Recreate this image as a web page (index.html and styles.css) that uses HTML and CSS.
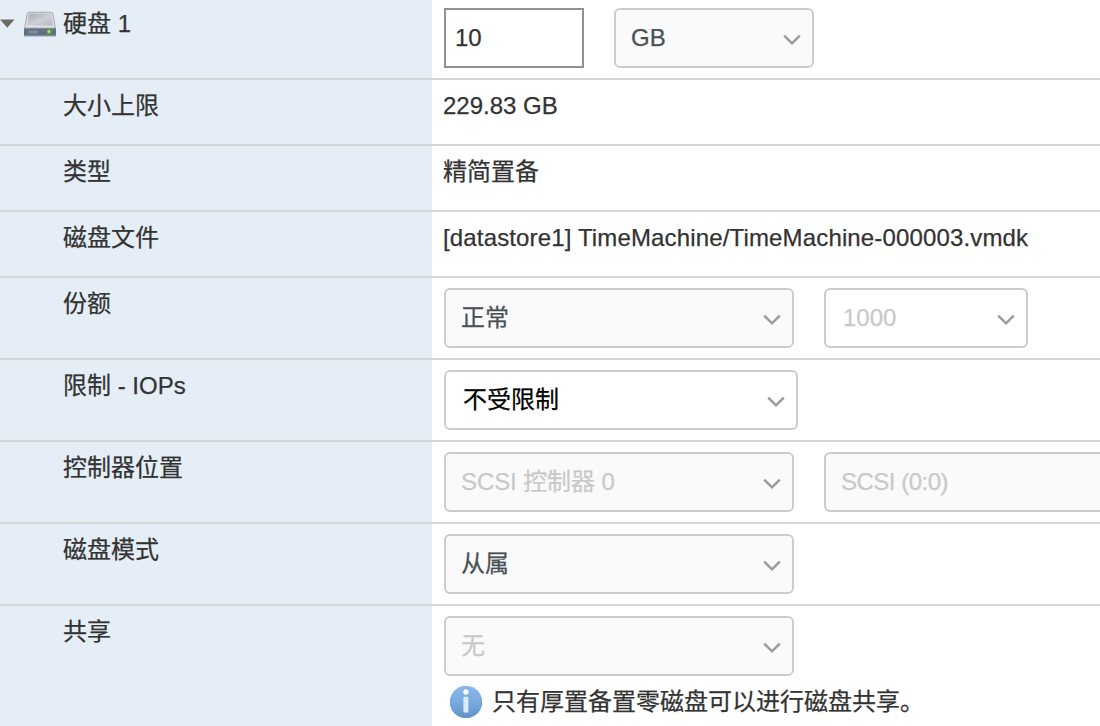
FILE: index.html
```html
<!DOCTYPE html>
<html lang="zh-CN">
<head>
<meta charset="utf-8">
<title>硬盘 1</title>
<link rel="stylesheet" href="styles.css">
</head>
<body>
<svg class="defs" width="0" height="0">
  <symbol id="chevron" viewBox="0 0 18 12"><path d="M1.2 1.700 L9 9.300 L16.800 1.700" fill="none" stroke="#9b9b9b" stroke-width="2.5"/></symbol>
</svg>
<main class="settings">
  <section class="row row-disk">
    <div class="label label-disk">
      <svg class="toggle" width="16" height="10" viewBox="0 0 16 10"><path d="M0 .5H14.5L7.2 8.8Z" fill="#6b6b66"/></svg>
      <svg class="disk" width="32" height="26" viewBox="0 0 32 26">
        <defs>
          <linearGradient id="top" x1="0" y1="0" x2="1" y2="1"><stop offset="0" stop-color="#a5a9b5"/><stop offset=".55" stop-color="#cfd1d8"/><stop offset="1" stop-color="#b2b5be"/></linearGradient>
          <linearGradient id="front" x1="0" y1="0" x2="0" y2="1"><stop offset="0" stop-color="#68737f"/><stop offset=".7" stop-color="#5c6b7c"/><stop offset="1" stop-color="#96a2b0"/></linearGradient>
        </defs>
        <path d="M4.500 .8H27.500Q28.700 .8 29.200 2.400L32 18H0L2.800 2.400Q3.300 .8 4.500 .8Z" fill="#a3a7b0"/>
        <path d="M5 1.800H27Q27.900 1.800 28.200 2.800L30.600 16.600H1.400L3.800 2.800Q4.100 1.800 5 1.800Z" fill="#e4e6ea"/>
        <path d="M5.600 2.400H26.400Q27 2.400 27.200 3.200L28.900 14.800H3.100L4.800 3.200Q5 2.400 5.600 2.400Z" fill="url(#top)"/>
        <path d="M0 17.500H32V25.500H0Z" fill="url(#front)"/>
        <path d="M4.500 19.500H14V22.500H4.500Z" fill="#7f8b97"/>
        <circle cx="25.200" cy="20.700" r="2.700" fill="#64904a"/><circle cx="24.900" cy="20.400" r="1.500" fill="#aedf80"/>
      </svg>
      <span>硬盘 1</span>
    </div>
    <div class="value">
      <div class="fields">
        <input class="size" type="text" value="10">
        <div class="select select-unit"><span>GB</span><svg class="arrow"><use href="#chevron"/></svg></div>
      </div>
    </div>
  </section>
  <section class="row row-text"><div class="label">大小上限</div><div class="value">229.83 GB</div></section>
  <section class="row row-text"><div class="label">类型</div><div class="value">精简置备</div></section>
  <section class="row row-text"><div class="label">磁盘文件</div><div class="value"><span class="path">[datastore1] TimeMachine/TimeMachine-000003.vmdk</span></div></section>
  <section class="row">
    <div class="label">份额</div>
    <div class="value"><div class="fields">
      <div class="select"><span>正常</span><svg class="arrow"><use href="#chevron"/></svg></div>
      <div class="select combo combo-shares disabled"><span>1000</span><svg class="arrow"><use href="#chevron"/></svg></div>
    </div></div>
  </section>
  <section class="row">
    <div class="label">限制 - IOPs</div>
    <div class="value"><div class="fields">
      <div class="select combo combo-limit"><span>不受限制</span><svg class="arrow"><use href="#chevron"/></svg></div>
    </div></div>
  </section>
  <section class="row">
    <div class="label">控制器位置</div>
    <div class="value"><div class="fields">
      <div class="select disabled"><span class="controller">SCSI 控制器 0</span><svg class="arrow"><use href="#chevron"/></svg></div>
      <div class="select disabled"><span class="slot">SCSI (0:0)</span><svg class="arrow"><use href="#chevron"/></svg></div>
    </div></div>
  </section>
  <section class="row">
    <div class="label">磁盘模式</div>
    <div class="value"><div class="fields">
      <div class="select"><span>从属</span><svg class="arrow"><use href="#chevron"/></svg></div>
    </div></div>
  </section>
  <section class="row row-share">
    <div class="label">共享</div>
    <div class="value">
      <div class="fields"><div class="select disabled"><span>无</span><svg class="arrow"><use href="#chevron"/></svg></div></div>
      <div class="note">
        <svg width="32" height="32" viewBox="0 0 32 32">
          <defs><linearGradient id="info" x1="0" y1="0" x2="0" y2="1"><stop offset="0" stop-color="#8bb8ee"/><stop offset=".5" stop-color="#79a9de"/><stop offset="1" stop-color="#6293c5"/></linearGradient></defs>
          <circle cx="16" cy="16" r="16.300" fill="url(#info)"/>
          <circle cx="15.900" cy="6" r="2.700" fill="#f6faff"/>
          <rect x="13.400" y="10.800" width="5" height="15.800" rx=".8" fill="#dce9f7"/>
        </svg>
        <span>只有厚置备置零磁盘可以进行磁盘共享。</span>
      </div>
    </div>
  </section>
</main>
</body>
</html>
```
FILE: styles.css
```css
* { box-sizing: border-box; }
body {
  margin: 0;
  overflow: hidden;
  background: #fff;
  color: #333;
  font: 24px/32px "Liberation Sans", "Noto Sans CJK SC", sans-serif;
  -webkit-text-stroke: .25px currentColor;
}
.defs { position: absolute; }
.settings { height: 726px; overflow: hidden; }
.row {
  display: grid;
  grid-template-columns: 432px 1fr;
  height: 82px;
  border-bottom: 2px solid #d6d6d6;
}
.row-disk { height: 80px; }
.row-text { height: 66px; }
.row-share { height: 122px; border-bottom: 0; }
.label { background: #e5eef6; padding: 10px 0 0 63px; }
.label-disk { display: flex; align-items: flex-start; padding: 8px 0 0; }
.toggle { margin-top: 11px; margin-right: 8px; }
.disk { margin-top: 3px; margin-right: 7px; }
.value { padding: 10px 0 0 11px; min-width: 0; white-space: nowrap; }
.row-disk .value { padding-top: 8px; }
.fields { display: flex; gap: 30px; padding-left: 1px; }
.path { letter-spacing: .15px; }
.controller { letter-spacing: -.1px; }
.slot { letter-spacing: -.5px; }
.size {
  width: 140px;
  height: 60px;
  border: 2px solid #919191;
  padding: 0 9px;
  background: #fff;
  color: #333;
  font: inherit;
}
.select {
  display: flex;
  flex: 0 0 350px;
  align-items: center;
  justify-content: space-between;
  height: 60px;
  padding: 0 11px 0 15px;
  border: 2px solid #ccc;
  border-radius: 6px;
  background: #fafafa;
  color: #495156;
}
.select-unit { flex-basis: 200px; }
.combo { background: #fff; color: #000; padding-left: 17px; }
.combo-shares { flex-basis: 204px; }
.combo-limit { flex-basis: 354px; }
.disabled { color: #c9c9c9; }
.arrow { width: 18px; height: 12px; margin-top: 4px; }
.note { display: flex; align-items: center; gap: 10px; padding: 10px 0 0 7px; }
```
